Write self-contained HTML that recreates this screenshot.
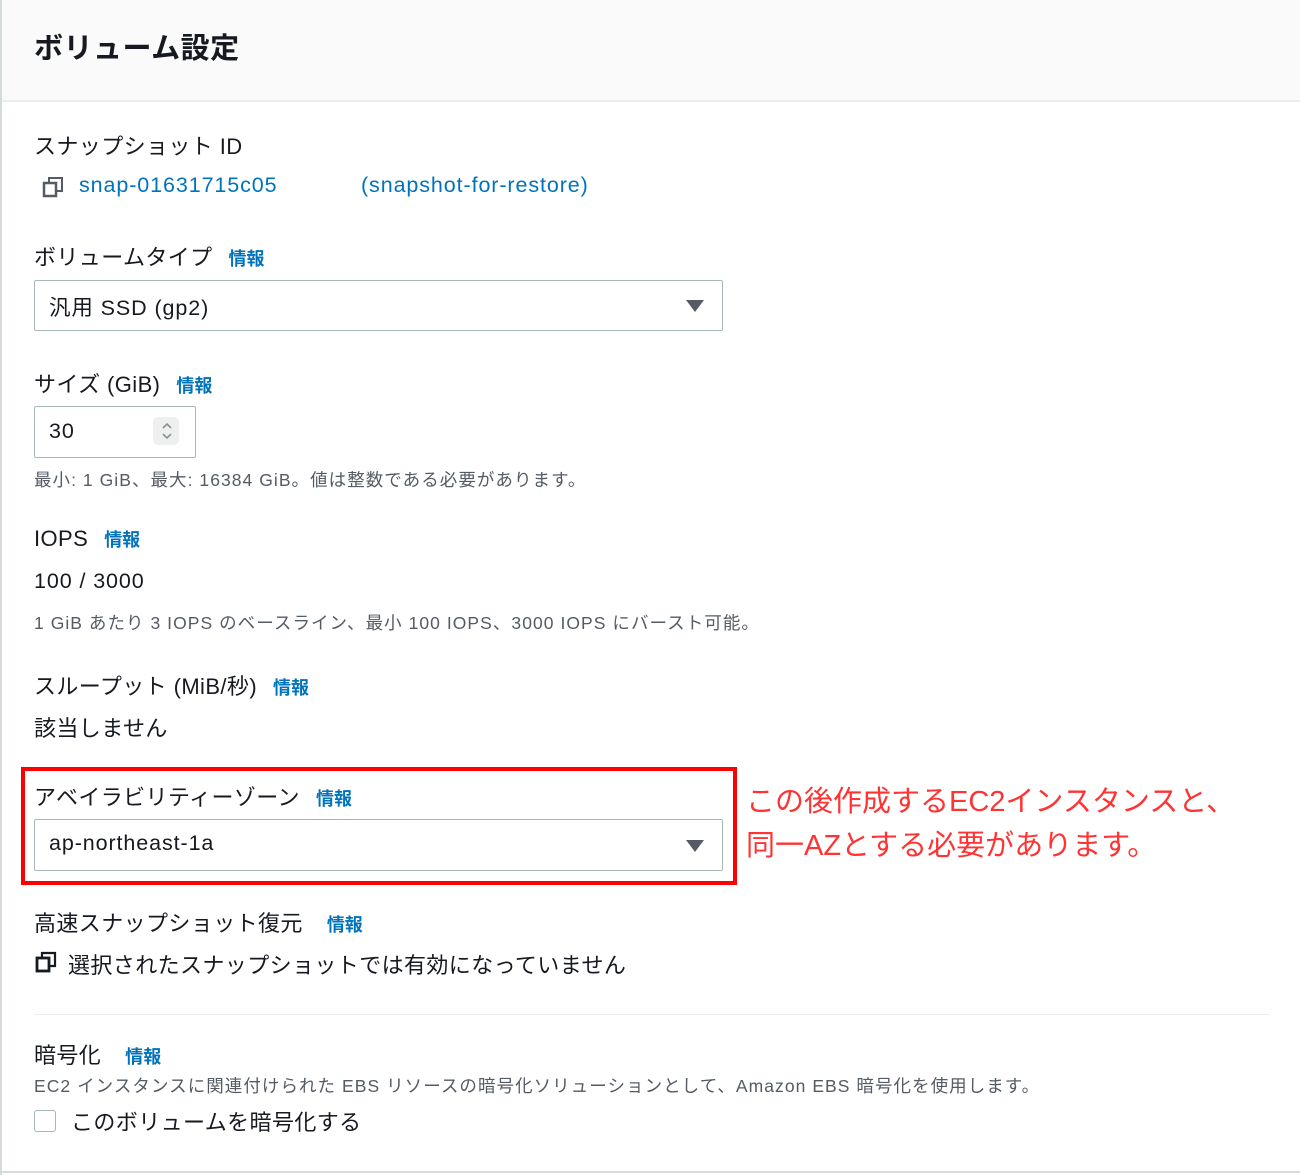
<!DOCTYPE html>
<html><head><meta charset="utf-8"><style>
body{margin:0;width:1300px;height:1175px;background:#fff;font-family:"Liberation Sans","Noto Sans CJK JP",sans-serif;color:#16191f;position:relative;overflow:hidden}
.a{position:absolute;white-space:nowrap}
.lab{font-size:22px;letter-spacing:0.4px;color:#16191f}
.info{font-size:18px;font-weight:bold;color:#0073bb;margin-left:16px;letter-spacing:0}
.sm{font-size:17.5px;letter-spacing:1.05px;color:#545b64}
.v{font-size:21.5px;letter-spacing:0.9px}
.box{position:absolute;border:1px solid #aab7b8;border-radius:2px;background:#fff}
.tri{position:absolute;width:0;height:0;border-left:9px solid transparent;border-right:9px solid transparent;border-top:12px solid #545b64}
</style></head><body>
<div class="a" style="left:0;top:0;width:1300px;height:100px;background:#fafafa;border-bottom:2px solid #eaeded"></div>
<div class="a" style="left:0;top:0;width:2px;height:1175px;background:#d5dbdb"></div>
<div class="a" style="left:0;top:1171px;width:1300px;height:2px;background:#d5dbdb"></div>
<div class="a" style="left:34px;top:25px;font-size:29px;font-weight:bold;letter-spacing:0.5px">ボリューム設定</div>

<div class="a lab" style="left:34px;top:129px">スナップショット ID</div>
<svg class="a" style="left:42px;top:176px" width="22" height="22" viewBox="0 0 22 22"><rect x="2" y="7" width="12" height="13" fill="none" stroke="#545b64" stroke-width="2.5"/><path d="M7 7V2h13v13h-6" fill="none" stroke="#545b64" stroke-width="2"/></svg>
<div class="a v" style="left:79px;top:173px;color:#0073bb">snap-01631715c05</div>
<div class="a" style="left:278px;top:170px;width:72px;height:32px;background:#fff"></div>
<div class="a v" style="left:361px;top:173px;color:#0073bb">(snapshot-for-restore)</div>

<div class="a lab" style="left:34px;top:240px">ボリュームタイプ<span class="info">情報</span></div>
<div class="box" style="left:34px;top:280px;width:687px;height:49px"></div>
<div class="a v" style="left:49px;top:291px">汎用 SSD (gp2)</div>
<div class="tri" style="left:686px;top:300px"></div>

<div class="a lab" style="left:34px;top:367px">サイズ (GiB)<span class="info">情報</span></div>
<div class="box" style="left:34px;top:406px;width:160px;height:50px"></div>
<div class="a v" style="left:49px;top:419px">30</div>
<div class="a" style="left:153px;top:417px;width:26px;height:28px;border-radius:5px;background:#eef0f0"></div>
<svg class="a" style="left:160px;top:419px" width="14" height="24"><path d="M3 9l4-4 4 4M3 15l4 4 4-4" fill="none" stroke="#879596" stroke-width="1.6"/></svg>
<div class="a sm" style="left:34px;top:467px">最小: 1 GiB、最大: 16384 GiB。値は整数である必要があります。</div>

<div class="a lab" style="left:34px;top:526px">IOPS<span class="info">情報</span></div>
<div class="a v" style="left:34px;top:569px">100 / 3000</div>
<div class="a sm" style="left:34px;top:610px">1 GiB あたり 3 IOPS のベースライン、最小 100 IOPS、3000 IOPS にバースト可能。</div>

<div class="a lab" style="left:34px;top:669px">スループット (MiB/秒)<span class="info">情報</span></div>
<div class="a lab" style="left:34px;top:711px">該当しません</div>

<div class="a" style="left:21px;top:767px;width:708px;height:110px;border:4px solid #f00"></div>
<div class="a lab" style="left:34px;top:780px">アベイラビリティーゾーン<span class="info">情報</span></div>
<div class="box" style="left:34px;top:819px;width:687px;height:50px"></div>
<div class="a v" style="left:49px;top:831px">ap-northeast-1a</div>
<div class="tri" style="left:686px;top:840px"></div>
<div class="a" style="left:746px;top:780px;font-size:29px;color:#f33;line-height:44px">この後作成するEC2インスタンスと、<br>同一AZとする必要があります。</div>

<div class="a lab" style="left:34px;top:906px">高速スナップショット復元<span class="info" style="margin-left:24px">情報</span></div>
<svg class="a" style="left:35px;top:951px" width="22" height="22" viewBox="0 0 22 22"><rect x="2" y="7" width="12" height="13" fill="none" stroke="#16191f" stroke-width="2.8"/><path d="M7 7V2h13v13h-6" fill="none" stroke="#16191f" stroke-width="2.2"/></svg>
<div class="a lab" style="left:68px;top:948px">選択されたスナップショットでは有効になっていません</div>

<div class="a" style="left:34px;top:1014px;width:1236px;height:1px;background:#eaeded"></div>
<div class="a lab" style="left:34px;top:1038px">暗号化<span class="info" style="margin-left:24px">情報</span></div>
<div class="a sm" style="left:34px;top:1073px">EC2 インスタンスに関連付けられた EBS リソースの暗号化ソリューションとして、Amazon EBS 暗号化を使用します。</div>
<div class="a" style="left:34px;top:1110px;width:20px;height:20px;border:1.5px solid #aab7b8;border-radius:3px"></div>
<div class="a lab" style="left:71px;top:1105px">このボリュームを暗号化する</div>
</body></html>
